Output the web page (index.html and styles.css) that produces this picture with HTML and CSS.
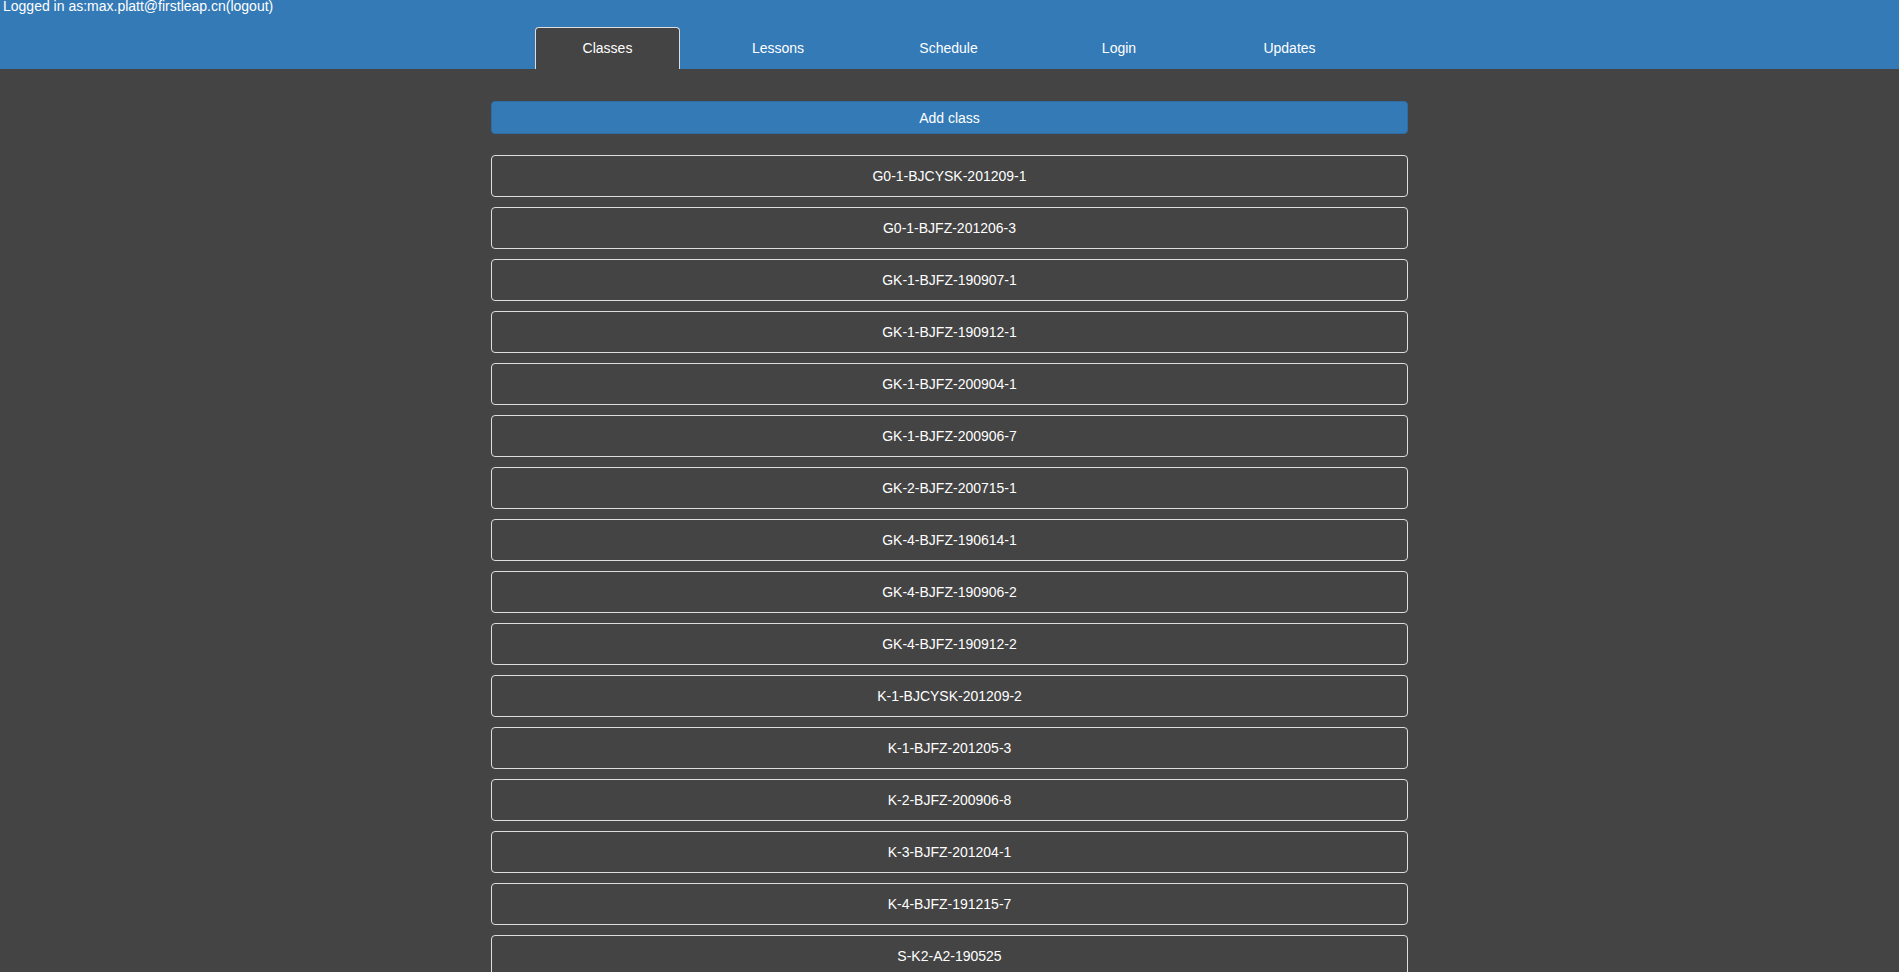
FILE: index.html
```html
<!DOCTYPE html>
<html>
<head>
<meta charset="utf-8">
<link rel="stylesheet" href="styles.css">
</head>
<body>
<header class="header">
  <div class="login-line">Logged in as:max.platt@firstleap.cn(logout)</div>
  <nav class="tabs">
    <a class="tab active">Classes</a>
    <a class="tab">Lessons</a>
    <a class="tab">Schedule</a>
    <a class="tab">Login</a>
    <a class="tab">Updates</a>
  </nav>
</header>
<main class="content">
  <button class="add-btn">Add class</button>
  <ul class="class-list">
    <li class="class-item">G0-1-BJCYSK-201209-1</li>
    <li class="class-item">G0-1-BJFZ-201206-3</li>
    <li class="class-item">GK-1-BJFZ-190907-1</li>
    <li class="class-item">GK-1-BJFZ-190912-1</li>
    <li class="class-item">GK-1-BJFZ-200904-1</li>
    <li class="class-item">GK-1-BJFZ-200906-7</li>
    <li class="class-item">GK-2-BJFZ-200715-1</li>
    <li class="class-item">GK-4-BJFZ-190614-1</li>
    <li class="class-item">GK-4-BJFZ-190906-2</li>
    <li class="class-item">GK-4-BJFZ-190912-2</li>
    <li class="class-item">K-1-BJCYSK-201209-2</li>
    <li class="class-item">K-1-BJFZ-201205-3</li>
    <li class="class-item">K-2-BJFZ-200906-8</li>
    <li class="class-item">K-3-BJFZ-201204-1</li>
    <li class="class-item">K-4-BJFZ-191215-7</li>
    <li class="class-item">S-K2-A2-190525</li>
  </ul>
</main>
</body>
</html>
```

FILE: styles.css
```css
html, body {
  margin: 0;
  padding: 0;
  background: #444444;
  color: #ffffff;
  font-family: "Liberation Sans", Arial, sans-serif;
  font-size: 14px;
}

.header {
  background: #337ab7;
  height: 69px;
  display: flex;
  flex-direction: column;
}

.login-line {
  height: 27px;
  line-height: 12px;
  padding-left: 3px;
  color: #ffffff;
}

.tabs {
  display: flex;
  justify-content: center;
  gap: 25.5px;
  height: 42px;
  padding-right: 2px;
}

.tab {
  width: 145px;
  box-sizing: border-box;
  display: flex;
  align-items: center;
  justify-content: center;
  color: #ffffff;
  border: 1px solid transparent;
  border-bottom: none;
  border-radius: 4px 4px 0 0;
  padding-bottom: 2px;
}

.tab.active {
  background: #444444;
  border-color: #dddddd;
}

.content {
  width: 917px;
  margin: 0 auto;
  padding-top: 32px;
  display: flex;
  flex-direction: column;
}

.add-btn {
  height: 33px;
  background: #337ab7;
  border: 1px solid #2e6da4;
  border-radius: 4px;
  color: #ffffff;
  font-family: "Liberation Sans", Arial, sans-serif;
  font-size: 14px;
  padding: 0;
  margin-bottom: 21px;
}

.class-list {
  list-style: none;
  margin: 0;
  padding: 0;
  display: flex;
  flex-direction: column;
  gap: 10px;
}

.class-item {
  height: 42px;
  box-sizing: border-box;
  border: 1px solid #dddddd;
  border-radius: 4px;
  display: flex;
  align-items: center;
  justify-content: center;
}
```
